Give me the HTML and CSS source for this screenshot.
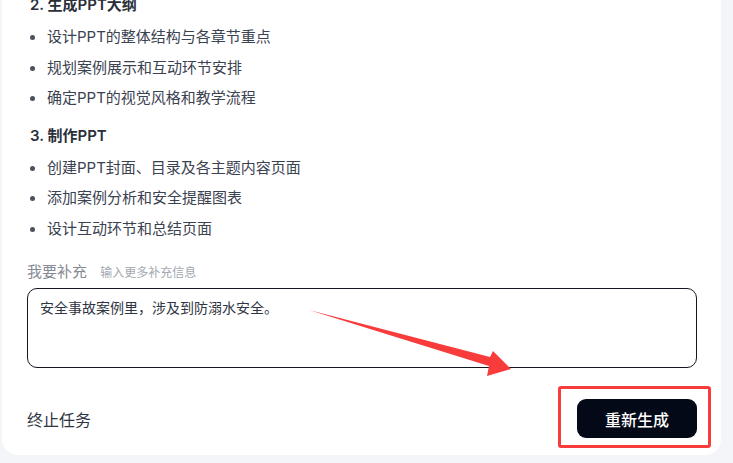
FILE: index.html
```html
<!DOCTYPE html>
<html lang="zh-CN">
<head>
    <meta charset="UTF-8">
    <meta name="viewport" content="width=device-width, initial-scale=1.0">
    <title>生成PPT</title>
    <link rel="stylesheet" href="styles.css">
</head>
<body>
    <div class="card">
        <div class="outline">
            <h3 class="step">2. 生成PPT大纲</h3>
            <ul class="tasks">
                <li>设计PPT的整体结构与各章节重点</li>
                <li>规划案例展示和互动环节安排</li>
                <li>确定PPT的视觉风格和教学流程</li>
            </ul>
            <h3 class="step">3. 制作PPT</h3>
            <ul class="tasks">
                <li>创建PPT封面、目录及各主题内容页面</li>
                <li>添加案例分析和安全提醒图表</li>
                <li>设计互动环节和总结页面</li>
            </ul>
        </div>

        <div class="extra">
            <div class="extra-label">我要补充 <span class="hint">输入更多补充信息</span></div>
            <textarea class="extra-input">安全事故案例里，涉及到防溺水安全。</textarea>
        </div>

        <div class="footer">
            <span class="stop">终止任务</span>
            <div class="regen-wrap">
                <button class="regen">重新生成</button>
                <span class="highlight"></span>
            </div>
        </div>
    </div>

    <!-- annotation arrow -->
    <svg class="arrow" width="733" height="463" viewBox="0 0 733 463">
        <polygon points="309,310 490,357 493,351 511,369 487,376 489,366" fill="#f83c3c"/>
    </svg>
</body>
</html>
```

FILE: styles.css
```css
body {
    margin: 0;
    background: #f4f5f8;
    font-family: Inter, "Noto Sans CJK SC", "Noto Sans", sans-serif;
    color: #2f3542;
    overflow: hidden;
}
.card {
    background: #fff;
    margin: -7px 12px 0 2px;
    padding: 0 24px 17px 25px;
    border-radius: 0 0 16px 16px;
}
.outline {
    padding-left: 3px;
}
.step {
    margin: 0;
    font-size: 15px;
    line-height: 24px;
    font-weight: 600;
    color: #2a2f3a;
}
.tasks {
    list-style: none;
    margin: 7px 0 0;
    padding: 0;
}
.tasks + .step {
    margin-top: 10px;
}
.step + .tasks {
    margin-top: 5px;
}
.tasks li {
    position: relative;
    padding-left: 17px;
    font-size: 15px;
    line-height: 30.5px;
    color: #3b4250;
}
.tasks li::before {
    content: "";
    position: absolute;
    left: 0;
    top: 13px;
    width: 5px;
    height: 5px;
    border-radius: 50%;
    background: #4b515e;
}
.extra {
    margin-top: 18px;
}
.extra-label {
    font-size: 15px;
    line-height: 20px;
    color: #858a94;
    margin-bottom: 5px;
}
.hint {
    font-size: 12px;
    color: #a3a8b1;
    margin-left: 9px;
}
.extra-input {
    display: block;
    width: 100%;
    box-sizing: border-box;
    height: 80px;
    padding: 9px 12px;
    border: 1px solid #14171f;
    border-radius: 10px;
    font-family: inherit;
    font-size: 14px;
    line-height: 20px;
    color: #2f3542;
    resize: none;
    outline: none;
}
.footer {
    display: flex;
    justify-content: space-between;
    align-items: center;
    margin-top: 31px;
}
.stop {
    font-size: 16px;
    color: #2f3542;
}
.regen-wrap {
    position: relative;
}
.regen {
    display: block;
    width: 120px;
    height: 39px;
    border: none;
    border-radius: 9px;
    background: #030917;
    color: #fff;
    font-family: inherit;
    font-size: 16px;
    font-weight: 500;
    cursor: pointer;
}
.highlight {
    position: absolute;
    top: -13px;
    right: -14px;
    bottom: -10px;
    left: -19px;
    border: 3px solid #f83c3c;
    border-radius: 3px;
    pointer-events: none;
}
.arrow {
    position: absolute;
    left: 0;
    top: 0;
    pointer-events: none;
}
```
